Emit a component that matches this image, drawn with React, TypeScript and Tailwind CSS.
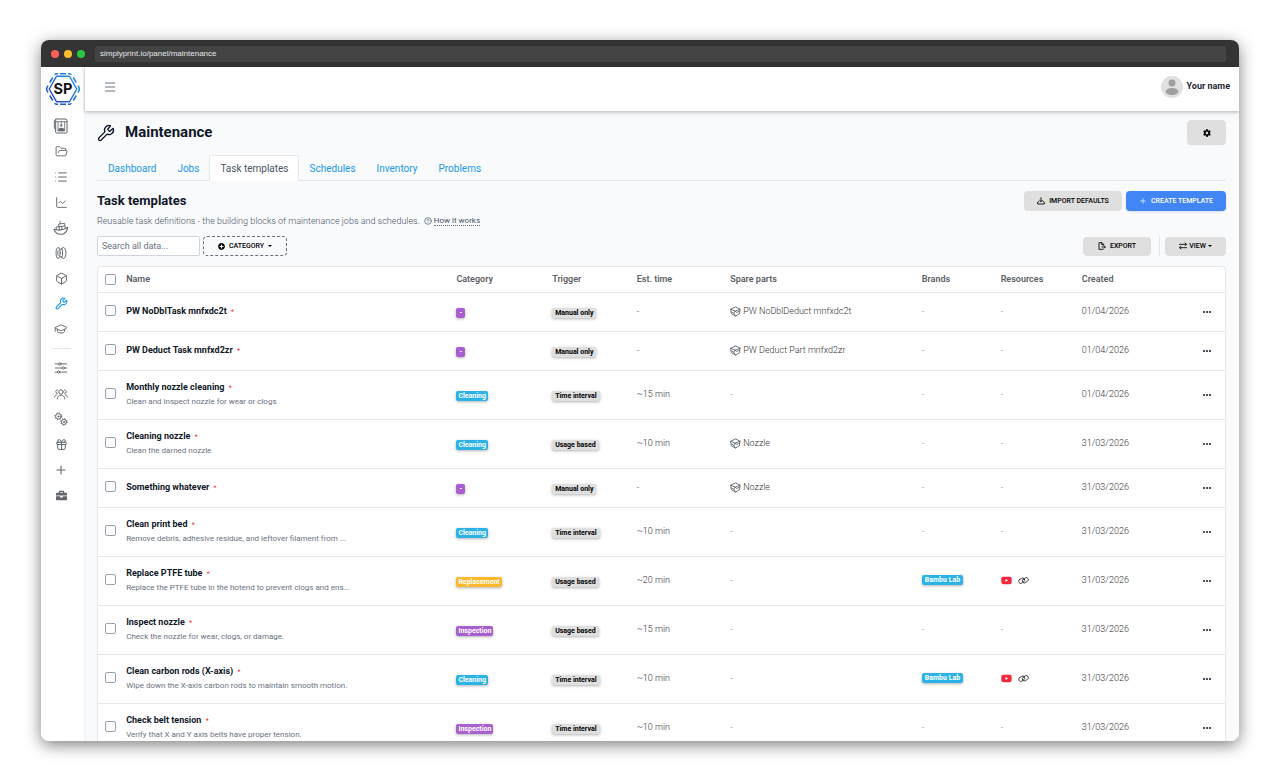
import type { ReactNode } from "react";
import { Box, ChartLine, CircleHelp, FolderOpen, Gift, GraduationCap, List, Menu, Plus, Wrench } from "lucide-react";
import { FaBriefcase, FaCog, FaPlusCircle, FaYoutube } from "react-icons/fa";

type Task = {
  name: string;
  description?: string;
  category: "-" | "Cleaning" | "Replacement" | "Inspection";
  trigger: string;
  time: string;
  part?: string;
  brand?: string;
  created: string;
};

const tasks: Task[] = [
  { name: "PW NoDblTask mnfxdc2t", category: "-", trigger: "Manual only", time: "-", part: "PW NoDblDeduct mnfxdc2t", created: "01/04/2026" },
  { name: "PW Deduct Task mnfxd2zr", category: "-", trigger: "Manual only", time: "-", part: "PW Deduct Part mnfxd2zr", created: "01/04/2026" },
  { name: "Monthly nozzle cleaning", description: "Clean and inspect nozzle for wear or clogs", category: "Cleaning", trigger: "Time interval", time: "~15 min", created: "01/04/2026" },
  { name: "Cleaning nozzle", description: "Clean the darned nozzle", category: "Cleaning", trigger: "Usage based", time: "~10 min", part: "Nozzle", created: "31/03/2026" },
  { name: "Something whatever", category: "-", trigger: "Manual only", time: "-", part: "Nozzle", created: "31/03/2026" },
  { name: "Clean print bed", description: "Remove debris, adhesive residue, and leftover filament from ...", category: "Cleaning", trigger: "Time interval", time: "~10 min", created: "31/03/2026" },
  { name: "Replace PTFE tube", description: "Replace the PTFE tube in the hotend to prevent clogs and ens...", category: "Replacement", trigger: "Usage based", time: "~20 min", brand: "Bambu Lab", created: "31/03/2026" },
  { name: "Inspect nozzle", description: "Check the nozzle for wear, clogs, or damage.", category: "Inspection", trigger: "Usage based", time: "~15 min", created: "31/03/2026" },
  { name: "Clean carbon rods (X-axis)", description: "Wipe down the X-axis carbon rods to maintain smooth motion.", category: "Cleaning", trigger: "Time interval", time: "~10 min", brand: "Bambu Lab", created: "31/03/2026" },
  { name: "Check belt tension", description: "Verify that X and Y axis belts have proper tension.", category: "Inspection", trigger: "Time interval", time: "~10 min", created: "31/03/2026" },
];

const categoryColors = {
  "-": "px-[3px] bg-[#a85fd0] text-white",
  Cleaning: "px-[2px] bg-[#2bb2e6] text-white",
  Replacement: "px-[2px] bg-[#fdb92e] text-white",
  Inspection: "px-[2px] bg-[#a85fd0] text-white",
};

const columns = [
  { label: "Name", width: "w-[29.3%]" },
  { label: "Category", width: "w-[8.5%]" },
  { label: "Trigger", width: "w-[7.5%]" },
  { label: "Est. time", width: "w-[8.3%]" },
  { label: "Spare parts", width: "w-[17%]" },
  { label: "Brands", width: "w-[7%]" },
  { label: "Resources", width: "w-[7.2%]" },
  { label: "Created", width: "w-[9.7%]" },
];

const tabs = ["Dashboard", "Jobs", "Task templates", "Schedules", "Inventory", "Problems"];

function Svg({ children, className = "size-3.5" }: { children: ReactNode; className?: string }) {
  return (
    <svg viewBox="0 0 24 24" className={className} fill="none" stroke="currentColor" strokeWidth="1.6" strokeLinecap="round" strokeLinejoin="round" aria-hidden="true">
      {children}
    </svg>
  );
}

function PrinterIcon() {
  return (
    <Svg className="size-4">
      <path d="M4.500 1.500h15l1.500 2V21a1.500 1.500 0 0 1-1.500 1.500h-14A1.500 1.500 0 0 1 4 21v-4M4.500 1.500 2 4.500V15l2 2V4" strokeWidth="1.500" />
      <path d="M4.500 5.500H21M7.500 6v13M17.500 6v13M12.500 5.500v5" strokeWidth="1.200" />
      <path d="M11 10.500h3l-1.500 2zM9.500 15.500h6v2h1.500v2H8v-2h1.500z" fill="currentColor" strokeWidth="1" />
    </Svg>
  );
}

function ShipIcon() {
  return (
    <Svg className="size-4">
      <path d="M1.500 14c6 2 14 1 20.500-3-1 6-4.500 10.500-10 10.500-5.500 0-9-3-10.500-7.500z" />
      <path d="m5 14-.5-3.500L9 10l.5 4.500M9 10l-.5-4 4-.5 5-.5.8 7M9 10l8.500-1M13.500 14l-.5-4.500M11 5.500 10.500 2" strokeWidth="1.400" />
    </Svg>
  );
}

function FilamentIcon() {
  return (
    <Svg>
      <ellipse cx="7" cy="12" rx="3.500" ry="9.500" />
      <path d="M7 8c-.8 2-.8 6 0 8M10.500 5.500h2.500M10.500 18.500h2.500" />
      <path d="M13.500 4c.8-1.200 1.700-1.500 2.500-1.500 2.500 0 4.500 4 4.500 9.500s-2 9.500-4.500 9.500c-.8 0-1.700-.3-2.500-1.500M13.500 4c1.800 4 1.800 12 0 16" />
    </Svg>
  );
}

function SlidersIcon() {
  return (
    <Svg>
      <path d="M2 5h6M12 5h10M2 12h12M18 12h4M2 19h4M10 19h12" />
      <circle cx="10" cy="5" r="2" />
      <circle cx="16" cy="12" r="2" />
      <circle cx="8" cy="19" r="2" />
    </Svg>
  );
}

function UsersIcon() {
  return (
    <Svg>
      <circle cx="12" cy="8.500" r="3.800" />
      <path d="M5.500 20.500c.5-4.500 3-6.500 6.500-6.500s6 2 6.500 6.500" />
      <path d="M6 11a3 3 0 1 1 0-6M18 11a3 3 0 1 0 0-6M1 17.500c.2-2.500 1.500-4 3.500-4M23 17.500c-.2-2.500-1.500-4-3.500-4" />
    </Svg>
  );
}

function GearsIcon() {
  return (
    <Svg>
      <circle cx="7.500" cy="7.500" r="4.800" />
      <circle cx="7.500" cy="7.500" r="1" />
      <circle cx="7.500" cy="7.500" r="6" strokeDasharray="2.200 2.512" strokeLinecap="butt" />
      <circle cx="17" cy="17" r="4.400" />
      <circle cx="17" cy="17" r="1" />
      <circle cx="17" cy="17" r="5.600" strokeDasharray="2.100 2.298" strokeLinecap="butt" />
    </Svg>
  );
}

function PartIcon() {
  return (
    <Svg className="size-[11px] text-[#555f68]">
      <path d="M2 7 12 2l10 5-1.500 10L12 22l-8.500-5zM2 7l9 4.500L22 7" strokeWidth="1.900" />
      <path d="M11 11.500 8.500 16 3 13M11 11.500l4 2.500 6-3M8.500 16l3.500 6" strokeWidth="1.700" />
    </Svg>
  );
}

function LinkIcon() {
  return (
    <Svg className="size-[11px]">
      <rect x="1" y="8" width="14" height="9" rx="4.500" transform="rotate(-32 8 12.500)" strokeWidth="1.800" />
      <rect x="9" y="7" width="14" height="9" rx="4.500" transform="rotate(-32 16 11.500)" strokeWidth="1.800" />
    </Svg>
  );
}

function SwapIcon() {
  return (
    <Svg className="size-2">
      <path d="M1 7h21M18 3l4.500 4L18 11M23 17H2M6 13l-4.500 4L6 21" strokeWidth="2.500" />
    </Svg>
  );
}

function ExportIcon() {
  return (
    <Svg className="size-2">
      <path d="M17 9V7l-5-5H3v20h12M11 2v6h5M12 15h9M18 11l4 4-4 4" strokeWidth="2.600" />
    </Svg>
  );
}

function ImportIcon() {
  return (
    <Svg className="size-2">
      <path d="M12 2v12M8 10l4 4 4-4M6 13l-4 3v5h20v-5l-4-3" strokeWidth="2.600" />
    </Svg>
  );
}

function Logo() {
  return (
    <svg viewBox="0 0 68 64" className="h-8 w-[34px]" role="img" aria-label="SP">
      <defs>
        <linearGradient id="logo-blue" x1="0" y1="1" x2="1" y2="0">
          <stop offset="0" stopColor="#2443c8" />
          <stop offset="1" stopColor="#2196e8" />
        </linearGradient>
      </defs>
      <g fill="none" stroke="url(#logo-blue)" strokeWidth="3" strokeLinejoin="round">
        <path d="M21 6.500h26L61.500 32 47 57.500H21L6.500 32z" />
        <path d="M28 1.500h12M17 3.500l3-2h4M44 1.500h4l3 2M13.500 9l-6 10M54.500 9l6 10M4 25l-2.500 5v4L4 39M64 25l2.500 5v4L64 39M7.500 45l6 10M60.500 45l-6 10M17 60.500l3 2h4M44 62.500h4l3-2M28 62.500h12" />
      </g>
      <text x="34" y="42" textAnchor="middle" fontSize="29" fontWeight="700" fill="#111" fontFamily="Inter, sans-serif">SP</text>
    </svg>
  );
}

function NavItem({ label, active, children }: { label: string; active?: boolean; children: ReactNode }) {
  return (
    <a href="#" aria-label={label} className={`flex h-6 items-center justify-center ${active ? "text-[#1595f3]" : "text-[#60666c]"}`}>
      {children}
    </a>
  );
}

function Sidebar() {
  return (
    <aside className="flex w-11 shrink-0 flex-col border-r border-gray-100 bg-white">
      <a href="#" aria-label="Home" className="mb-[9px] mt-1.5 flex justify-center">
        <Logo />
      </a>
      <nav className="pr-[3px]">
        <div className="flex h-[227px] flex-col justify-between">
          <NavItem label="Printers"><PrinterIcon /></NavItem>
          <NavItem label="Files"><FolderOpen className="size-[13px]" strokeWidth={1.7} /></NavItem>
          <NavItem label="Queue"><List className="size-3.5" strokeWidth={1.7} /></NavItem>
          <NavItem label="Statistics"><ChartLine className="size-[13px]" strokeWidth={1.7} /></NavItem>
          <NavItem label="Slicer"><ShipIcon /></NavItem>
          <NavItem label="Filament"><FilamentIcon /></NavItem>
          <NavItem label="Models"><Box className="size-[13px]" strokeWidth={1.8} /></NavItem>
          <NavItem label="Maintenance" active><Wrench className="size-[13px]" strokeWidth={2} /></NavItem>
          <NavItem label="Academy"><GraduationCap className="size-3.5 -scale-x-100" strokeWidth={1.6} /></NavItem>
        </div>
        <hr className="mx-2.5 my-[7px] border-gray-200" />
        <div className="flex h-[152px] flex-col justify-between">
          <NavItem label="Settings"><SlidersIcon /></NavItem>
          <NavItem label="Users"><UsersIcon /></NavItem>
          <NavItem label="System"><GearsIcon /></NavItem>
          <NavItem label="Rewards"><Gift className="size-[13px]" strokeWidth={1.8} /></NavItem>
          <NavItem label="Add"><Plus className="size-3.5" strokeWidth={1.8} /></NavItem>
          <NavItem label="Business"><FaBriefcase className="size-[11px]" /></NavItem>
        </div>
      </nav>
    </aside>
  );
}

function Header() {
  return (
    <header className="z-10 flex h-11 shrink-0 items-center justify-between bg-white pb-1 pl-[18px] pr-[9px] shadow-[0_1px_4px_rgba(0,0,0,0.3)]">
      <button aria-label="Toggle menu" className="text-gray-500">
        <Menu className="size-3.5" strokeWidth={1.8} />
      </button>
      <a href="#" className="flex items-center gap-1 text-[9px] font-bold text-gray-800">
        <svg viewBox="0 0 22 22" className="size-[22px]" aria-hidden="true">
          <circle cx="11" cy="11" r="11" fill="#e0e0e0" />
          <circle cx="11" cy="7" r="3.500" fill="#9e9e9e" />
          <ellipse cx="11" cy="15.500" rx="6.300" ry="3.600" fill="#9e9e9e" />
        </svg>
        Your name
      </a>
    </header>
  );
}

function Badge({ className, children }: { className: string; children: ReactNode }) {
  return (
    <span className={`inline-block rounded-xs align-middle text-[7px] font-bold leading-[10px] shadow-[0_1px_3px_rgba(0,0,0,0.3)] ${className}`}>
      {children}
    </span>
  );
}

function Checkbox({ label }: { label: string }) {
  return (
    <input type="checkbox" aria-label={label} className="block size-[11px] appearance-none rounded-xs border border-gray-400 bg-white checked:bg-blue-500" />
  );
}

function TaskRow({ task }: { task: Task }) {
  return (
    <tr className={`border-b border-gray-200 ${task.description ? "h-[49px]" : "h-[39px]"}`}>
      <td className="pb-[3px] pl-[7px]">
        <Checkbox label={`Select ${task.name}`} />
      </td>
      <td>
        <div className="font-bold leading-[14px] text-gray-900">
          {task.name} <span className="ml-0.5 text-[7px] font-normal text-red-500">*</span>
        </div>
        {task.description && <div className="text-[8px] font-normal leading-[14px] text-gray-500">{task.description}</div>}
      </td>
      <td className="pt-1">
        <Badge className={categoryColors[task.category]}>{task.category}</Badge>
      </td>
      <td className="pt-1">
        <Badge className="bg-[#dfdfdf] px-[3px] text-black">{task.trigger}</Badge>
      </td>
      <td>{task.time}</td>
      <td>
        {task.part ? (
          <span className="flex items-center gap-0.5"><PartIcon /> {task.part}</span>
        ) : (
          <span className="text-gray-500">-</span>
        )}
      </td>
      <td>
        {task.brand ? <Badge className="bg-[#2bb2e6] px-[3px] text-white">{task.brand}</Badge> : <span className="text-gray-500">-</span>}
      </td>
      <td>
        {task.brand ? (
          <span className="flex items-center gap-1.5">
            <FaYoutube className="size-[11px] text-[#f8263c]" aria-label="Video" />
            <LinkIcon />
          </span>
        ) : (
          <span className="text-gray-500">-</span>
        )}
      </td>
      <td>{task.created}</td>
      <td className="pr-2.5">
        <button aria-label={`Actions for ${task.name}`} className="ml-auto flex items-center gap-px p-1">
          <span className="size-[2px] rounded-full bg-gray-900" />
          <span className="size-[2px] rounded-full bg-gray-900" />
          <span className="size-[2px] rounded-full bg-gray-900" />
        </button>
      </td>
    </tr>
  );
}

function TaskTable() {
  return (
    <div className="mt-2.5 rounded-t border border-b-0 border-gray-200 bg-white">
      <table className="w-full table-fixed border-collapse text-left text-[9px] font-light text-[#333]">
        <thead>
          <tr className="h-[25px] border-b border-gray-200 text-[#5c5f66]">
            <th className="w-[2.5%] pl-[7px]"><Checkbox label="Select all" /></th>
            {columns.map((column) => (
              <th key={column.label} className={`font-semibold ${column.width}`}>{column.label}</th>
            ))}
            <th aria-label="Actions" />
          </tr>
        </thead>
        <tbody>
          {tasks.map((task) => (
            <TaskRow key={task.name} task={task} />
          ))}
        </tbody>
      </table>
    </div>
  );
}

function Caret() {
  return <span className="border-x-2 border-t-2 border-x-transparent border-t-current" />;
}

export default function App() {
  return (
    <div className="h-screen bg-white px-[41px] pb-[41px] pt-10 font-[Roboto,sans-serif] text-gray-800">
      <div className="flex h-full flex-col overflow-hidden rounded-lg bg-white shadow-[0_4px_16px_rgba(0,0,0,0.5)]">
        <div className="flex h-[27px] shrink-0 items-center bg-[#343434] pl-2.5 pr-[13px]">
          <div className="mr-2.5 flex gap-[5px]">
            <span className="size-2 rounded-full bg-[#ff5f57]" />
            <span className="size-2 rounded-full bg-[#febc2e]" />
            <span className="size-2 rounded-full bg-[#28c840]" />
          </div>
          <div className="flex h-4 grow items-center rounded-xs bg-[#434343] px-[5px] pt-px font-['Liberation_Sans',sans-serif] text-[8px] text-gray-200">
            simplyprint.io/panel/maintenance
          </div>
        </div>

        <div className="flex min-h-0 grow">
          <Sidebar />
          <div className="flex min-w-0 grow flex-col">
            <Header />
            <main className="min-h-0 grow overflow-hidden bg-[#f8fafc] pl-3 pr-[13px] pt-[9px]">
              <div className="flex items-center justify-between">
                <h1 className="flex items-center gap-2.5 text-[15px] font-bold text-gray-900">
                  <Wrench className="size-[18px]" strokeWidth={1.8} />
                  Maintenance
                </h1>
                <button aria-label="Settings" className="flex h-[25px] w-[39px] items-center justify-center rounded bg-[#dfdfdf] text-black">
                  <FaCog className="size-2" />
                </button>
              </div>

              <nav className="mt-2.5 flex border-b border-gray-200 text-[10px]">
                {tabs.map((tab) => (
                  <a
                    key={tab}
                    href="#"
                    className={`-mb-px flex h-[26px] items-center rounded-t-xs border pl-2.5 pr-[9px] ${tab === "Task templates" ? "border-gray-200 border-b-white bg-white text-gray-600" : "border-transparent text-[#2196f3]"}`}
                  >
                    {tab}
                  </a>
                ))}
              </nav>

              <div className="mt-2.5 flex items-start justify-between">
                <div>
                  <h2 className="text-[13px] font-bold leading-5 text-gray-900">Task templates</h2>
                  <p className="mt-0.5 flex items-center text-[9px] font-light leading-4 text-gray-600">
                    Reusable task definitions - the building blocks of maintenance jobs and schedules.
                    <CircleHelp className="ml-1 mr-0.5 size-2" />
                    <a href="#" className="border-b border-dotted border-gray-500 text-[8px] font-normal leading-[9px]">How it works</a>
                  </p>
                </div>
                <div className="flex gap-1 text-[7px] font-medium">
                  <button className="flex h-5 w-[98px] items-center justify-center gap-1 rounded bg-[#dfdfdf] text-black">
                    <ImportIcon /> IMPORT DEFAULTS
                  </button>
                  <button className="flex h-5 w-[100px] items-center justify-center gap-1 rounded bg-[#4285f4] text-white shadow-sm">
                    <Plus className="size-2" /> CREATE TEMPLATE
                  </button>
                </div>
              </div>

              <div className="mt-[7px] flex items-center justify-between text-[7px] font-medium text-black">
                <div className="flex gap-[3px]">
                  <input
                    type="search"
                    aria-label="Search all data"
                    placeholder="Search all data..."
                    className="h-5 w-[103px] rounded-xs border border-gray-300 bg-white px-1 text-[9px] font-normal placeholder:text-gray-500"
                  />
                  <button className="flex h-5 w-[84px] items-center justify-center gap-1 rounded border border-dashed border-gray-500">
                    <FaPlusCircle className="size-[7px]" /> CATEGORY <Caret />
                  </button>
                </div>
                <div className="flex items-center">
                  <button className="flex h-[19px] w-[68px] items-center justify-center gap-1 rounded bg-[#dfdfdf]">
                    <ExportIcon /> EXPORT
                  </button>
                  <span className="ml-2 mr-[5px] h-5 w-px bg-gray-200" />
                  <button className="flex h-[19px] w-[61px] items-center justify-center gap-0.5 rounded bg-[#dfdfdf]">
                    <SwapIcon /> VIEW <Caret />
                  </button>
                </div>
              </div>

              <TaskTable />
            </main>
          </div>
        </div>
      </div>
    </div>
  );
}
